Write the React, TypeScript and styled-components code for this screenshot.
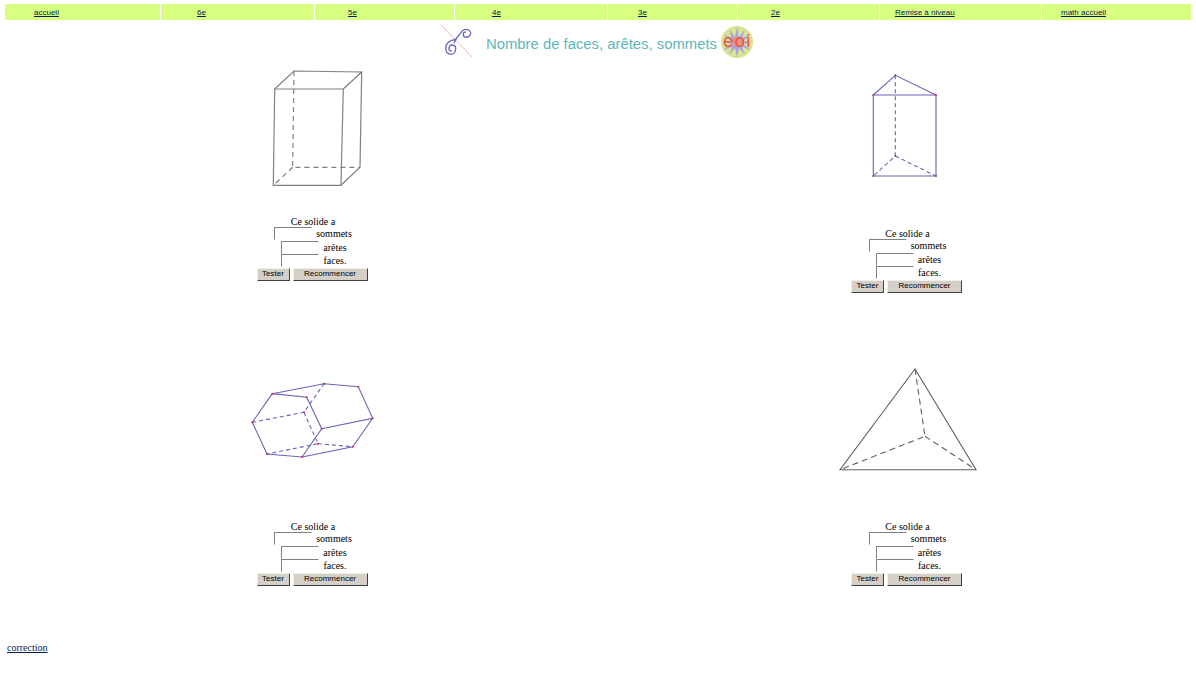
import React from 'react'
import styled, { createGlobalStyle } from 'styled-components'

const NAV_ITEMS = [
  { label: 'accueil', indent: 29 },
  { label: '6e', indent: 36 },
  { label: '5e', indent: 33 },
  { label: '4e', indent: 37 },
  { label: '3e', indent: 30 },
  { label: '2e', indent: 33 },
  { label: 'Remise à niveau', indent: 15 },
  { label: 'math accueil', indent: 19 },
]

const ExerciseForm = () => (
  <SForm>
    <SIntro>Ce solide a</SIntro>
    <SAnswerRow>
      <SInput type="text" />
      <span>sommets</span>
    </SAnswerRow>
    <SAnswerRow $shift={2}>
      <SInput type="text" />
      <span>arêtes</span>
    </SAnswerRow>
    <SAnswerRow $shift={2}>
      <SInput type="text" />
      <span>faces.</span>
    </SAnswerRow>
    <SButtons>
      <SButton type="button" $width={33}>Tester</SButton>
      <SButton type="button" $width={75}>Recommencer</SButton>
    </SButtons>
  </SForm>
)

const Dots = ({ points }: { points: number[][] }) => (
  <g fill="#c0304a">
    {points.map(([x, y]) => (
      <circle key={`${x}-${y}`} cx={x} cy={y} r="1" />
    ))}
  </g>
)

const App = () => (
  <>
    <GlobalStyle />
    <SNav>
      {NAV_ITEMS.map(({ label, indent }) => (
        <SNavCell key={label} $indent={indent}>
          <SNavLink href="#">{label}</SNavLink>
        </SNavCell>
      ))}
    </SNav>

    <STitleRow>
      <svg width="34" height="34" viewBox="0 0 34 34">
        <line x1="0" y1="0" x2="31" y2="32" stroke="#f4b8c4" strokeWidth="1" />
        <g fill="none" stroke="#6a66bc" strokeWidth="1.3">
          <path d="M15.3 14.3 C9 15 4.7 18 4.7 23.3 C4.7 27 7 29.3 10.7 29.3 C13 29.3 14.7 26.5 14.7 23.3 C14.7 21 13 20 10.7 20 C9 20 8 22 8 24.3 C8 25.5 9.5 26 10.7 26" />
          <path d="M13 18.3 C14 14 16 12 18 10 C20 7 22 4.3 24.7 4.3 C27.5 4.3 29.7 6 29.7 8.3 C29.7 10.5 27 12.3 24.7 12.3 C23 12.3 22.3 10.5 22.3 9 C22.3 8 23.5 7 24.7 7" />
        </g>
      </svg>
      <STitle>Nombre de faces, arêtes, sommets</STitle>
      <svg width="32" height="32" viewBox="0 0 32 32">
        <circle cx="16" cy="16" r="16" fill="#d8e592" />
        <polygon
          fill="#a8a2ea"
          points="16,1 18,11 24,3 21,12 30,8 22,15 31,16 22,18 30,24 21,21 24,29 18,22 16,31 14,22 8,29 11,21 2,24 10,18 1,16 10,15 2,8 11,12 8,3 14,11"
        />
        <circle cx="16" cy="16" r="5" fill="#ee8f86" />
        <SLogoText x="2" y="21">eoi</SLogoText>
      </svg>
    </STitleRow>

    <SExercises>
      <SExercise>
        <SFigure viewBox="238 62 150 154" width="150" height="154">
          <g fill="none" stroke="#808080" strokeWidth="1.2">
            <path d="M274.7 89 L343.3 89 L341 185.3 L273.3 185.3 Z" />
            <path d="M274.7 89 L294 71 L361.7 72 L343.3 89 M361.7 72 L360 167.3 L341 185.3" />
            <path strokeDasharray="5 4" d="M294 71 L292.7 167.3 L360 167.3 M292.7 167.3 L273.3 185.3" />
          </g>
        </SFigure>
        <ExerciseForm />
      </SExercise>

      <SExercise>
        <SFigure viewBox="833 62 150 166" width="150" height="166">
          <g fill="none" stroke="#6a62b8" strokeWidth="1.1">
            <path d="M873.3 95 L936 95 L936 176 L873.3 176 Z" />
            <path d="M873.3 95 L895.3 75.3 L936 95" />
            <path strokeDasharray="4 3" d="M895.3 75.3 L895.3 156 L873.3 176 M895.3 156 L936 176" />
          </g>
          <Dots points={[[895.3, 75.3], [873.3, 95], [936, 95], [873.3, 176], [936, 176], [895.3, 156]]} />
        </SFigure>
        <ExerciseForm />
      </SExercise>

      <SExercise>
        <SFigure viewBox="238 362 150 159" width="150" height="159">
          <g fill="none" stroke="#6a62b8" strokeWidth="1.1">
            <path d="M252.3 422.3 L272.3 393.7 L306.7 397.3 L321.7 428.7 L302 457 L267 454 Z" />
            <path d="M272.3 393.7 L324 383.7 L358.3 386.7 L372.7 418.3 L321.7 428.7 M372.7 418.3 L352.7 446.7 L302 457" />
            <path strokeDasharray="4 3" d="M252.3 422.3 L304 412.3 L324 383.7 M304 412.3 L318 443.7 L267 454 M318 443.7 L352.7 446.7" />
          </g>
          <Dots
            points={[
              [272.3, 393.7], [306.7, 397.3], [324, 383.7], [358.3, 386.7], [372.7, 418.3], [321.7, 428.7],
              [352.7, 446.7], [302, 457], [267, 454], [252.3, 422.3], [304, 412.3], [318, 443.7],
            ]}
          />
        </SFigure>
        <ExerciseForm />
      </SExercise>

      <SExercise>
        <SFigure viewBox="833 362 150 159" width="150" height="159">
          <g fill="none" stroke="#606060" strokeWidth="1.1">
            <path d="M915 369 L840 469.7 L976 469.7 Z" />
            <path strokeDasharray="6 4" d="M915 369 L925 436.3 L840 469.7 M925 436.3 L976 469.7" />
          </g>
        </SFigure>
        <ExerciseForm />
      </SExercise>
    </SExercises>

    <SCorrection href="#">correction</SCorrection>
  </>
)

const GlobalStyle = createGlobalStyle`
  body {
    margin: 0;
    background: #fff;
    font-family: 'Liberation Serif', serif;
    font-size: 10px;
    color: #000;
  }
`

const SNav = styled.nav`
  display: grid;
  grid-template-columns: 155px 153px 139px 152px 129px 141px 161px 149px;
  column-gap: 1px;
  margin: 4px 0 0 5px;
  width: 1187px;
`

const SNavCell = styled.div<{ $indent: number }>`
  height: 16px;
  line-height: 17px;
  padding-left: ${({ $indent }) => $indent}px;
  background: #d9ff80;
  font-family: 'Liberation Sans', Arial, sans-serif;
  font-size: 8px;
`

const SNavLink = styled.a`
  color: #00205a;
  text-decoration: underline;
`

const STitleRow = styled.div`
  display: flex;
  justify-content: center;
  align-items: center;
  height: 34px;
  margin: 5px 0 3px;
  padding-right: 2px;
`

const STitle = styled.h1`
  margin: 0 4px 0 11px;
  font-family: 'Liberation Sans', Arial, sans-serif;
  font-size: 14.85px;
  font-weight: 400;
  color: #5fb6b8;
  padding-top: 3px;
`

const SLogoText = styled.text`
  font-family: 'Liberation Sans', Arial, sans-serif;
  font-size: 19px;
  letter-spacing: 1px;
  fill: #f0583c;
`

const SExercises = styled.main`
  display: grid;
  grid-template-columns: 626px 563px;
  grid-template-rows: 300px 280px;
`

const SExercise = styled.section`
  display: flex;
  flex-direction: column;
  align-items: center;
`

const SFigure = styled.svg`
  display: block;
  flex: none;
`

const SForm = styled.form`
  display: flex;
  flex-direction: column;
  align-items: center;
`

const SIntro = styled.div`
  height: 11px;
  line-height: 12px;
`

const SAnswerRow = styled.div<{ $shift?: number }>`
  display: flex;
  gap: 4px;
  height: 13.5px;
  margin-left: ${({ $shift }) => $shift ?? 0}px;
  line-height: 14px;
`

const SInput = styled.input`
  box-sizing: border-box;
  width: 38px;
  height: 13px;
  margin: 0;
  padding: 0;
  border-style: solid;
  border-width: 1px;
  border-color: #808080 #fff #fff #808080;
  background: #fff;
`

const SButtons = styled.div`
  display: flex;
  gap: 3px;
  margin-right: 2px;
`

const SButton = styled.button<{ $width: number }>`
  box-sizing: border-box;
  width: ${({ $width }) => $width}px;
  height: 13px;
  padding: 0;
  border-style: solid;
  border-width: 1px;
  border-color: #f2f0ea #404040 #404040 #f2f0ea;
  background: #d4d0c8;
  font-family: 'Liberation Sans', Arial, sans-serif;
  font-size: 8px;
  line-height: 10px;
  color: #000;
`

const SCorrection = styled.a`
  display: block;
  width: max-content;
  margin: 0 0 0 7px;
  line-height: 12px;
  color: #00205a;
  text-decoration: underline;
`

export default App
